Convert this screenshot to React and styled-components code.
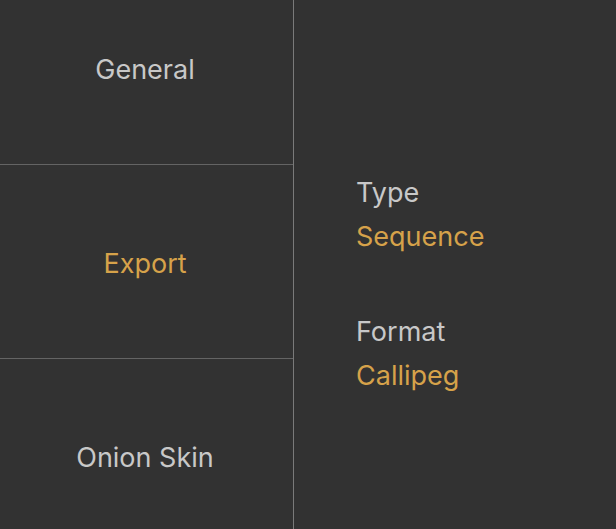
import React from "react";
import styled, { createGlobalStyle } from "styled-components";

const Global = createGlobalStyle`
  html, body { margin: 0; padding: 0; background: #323232; overflow: hidden; }
  body { font-family: Inter, "Noto Sans", "Liberation Sans", sans-serif; }
`;

const Screen = styled.div`
  display: flex;
  width: 616px;
  height: 529px;
  background: #323232;
  overflow: hidden;
`;

const Sidebar = styled.nav`
  width: 293px;
  flex: none;
  border-right: 1px solid #7a7a7a;
  display: flex;
  flex-direction: column;
  margin-top: -29px;
`;

const Tab = styled.div`
  flex: none;
  height: 189px;
  padding: 4px 3px 0 0;
  display: flex;
  align-items: center;
  justify-content: center;
  border-bottom: 1px solid #646464;
  font-size: 27px;
  color: ${(p) => (p.$active ? "#d6a24a" : "#c8c8c8")};
`;

const Detail = styled.section`
  flex: 1;
  padding: 175px 0 0 62px;
  display: flex;
  flex-direction: column;
  gap: 59px;
`;

const Field = styled.div`
  display: flex;
  flex-direction: column;
  gap: 8px;
`;

const Label = styled.div`
  font-size: 27px;
  line-height: 36px;
  color: #c8c8c8;
`;

const Value = styled.div`
  font-size: 27px;
  line-height: 36px;
  color: #d6a24a;
`;

export default function App() {
  return (
    <>
      <Global />
      <Screen>
        <Sidebar>
          <Tab>General</Tab>
          <Tab $active>Export</Tab>
          <Tab>Onion Skin</Tab>
        </Sidebar>
        <Detail>
          <Field>
            <Label>Type</Label>
            <Value>Sequence</Value>
          </Field>
          <Field>
            <Label>Format</Label>
            <Value>Callipeg</Value>
          </Field>
        </Detail>
      </Screen>
    </>
  );
}
